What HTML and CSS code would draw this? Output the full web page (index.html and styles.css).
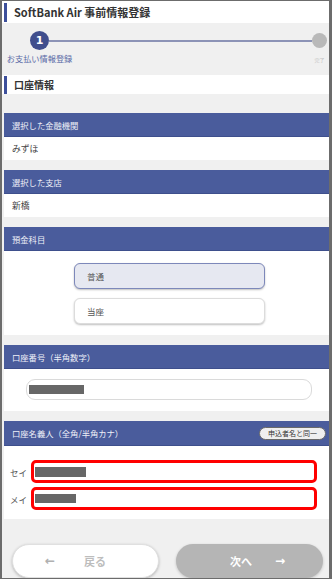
FILE: index.html
```html
<!DOCTYPE html>
<html lang="ja">
<head>
<meta charset="utf-8">
<title>SoftBank Air 事前情報登録</title>
<link rel="stylesheet" href="styles.css">
</head>
<body>
<div class="frame">
  <header class="title"><span class="mark"></span><h1>SoftBank Air 事前情報登録</h1></header>

  <div class="steps">
    <span class="dot active">1</span>
    <span class="line"></span>
    <span class="dot end"></span>
    <span class="label l1">お支払い情報登録</span>
    <span class="label l2">完了</span>
  </div>

  <h2 class="heading"><span class="mark"></span>口座情報</h2>

  <main class="cards">
    <section class="card">
      <div class="card-head">選択した金融機関</div>
      <div class="card-body value">みずほ</div>
    </section>

    <section class="card">
      <div class="card-head">選択した支店</div>
      <div class="card-body value">新橋</div>
    </section>

    <section class="card">
      <div class="card-head">預金科目</div>
      <div class="card-body choices">
        <button class="choice selected">普通</button>
        <button class="choice">当座</button>
      </div>
    </section>

    <section class="card">
      <div class="card-head">口座番号（半角数字）</div>
      <div class="card-body number">
        <div class="field"><span class="redact r1"></span></div>
      </div>
    </section>

    <section class="card">
      <div class="card-head split">口座名義人（全角/半角カナ）<button class="same">申込者名と同一</button></div>
      <div class="card-body names">
        <div class="name-row"><span class="kana">セイ</span><div class="field error"><span class="redact r2"></span></div></div>
        <div class="name-row"><span class="kana">メイ</span><div class="field error"><span class="redact r3"></span></div></div>
      </div>
    </section>
  </main>

  <footer class="nav">
    <button class="btn back"><span class="arrow">&#8592;</span><span>戻る</span></button>
    <button class="btn next"><span>次へ</span><span class="arrow">&#8594;</span></button>
  </footer>
</div>
</body>
</html>
```

FILE: styles.css
```css
* { box-sizing: border-box; }

html, body {
  margin: 0;
  padding: 0;
}

body {
  font-family: "Noto Sans CJK JP", "Noto Sans", sans-serif;
  color: #333;
}

.frame {
  width: 332px;
  height: 579px;
  border-style: solid;
  border-color: #6c6c6c;
  border-width: 1px 3px 1px 2px;
  background: #f0f0f0;
  overflow: hidden;
  display: flex;
  flex-direction: column;
}

.title {
  height: 23px;
  background: #fff;
  display: flex;
  align-items: center;
  padding-left: 2px;
}

.mark {
  display: block;
  width: 3px;
  height: 19px;
  background: #3d4f9b;
  margin-right: 7px;
}

.title h1 {
  margin: 0;
  font-size: 11px;
  font-weight: 700;
  color: #333;
  line-height: 1;
}

.steps {
  height: 53px;
  display: grid;
  grid-template-columns: 19px 1fr 15px;
  grid-template-rows: 19px auto;
  align-content: start;
  align-items: center;
  padding: 8px 2px 0 28px;
}

.dot {
  display: flex;
  align-items: center;
  justify-content: center;
  border-radius: 50%;
}

.dot.active {
  width: 19px;
  height: 19px;
  background: #404e8d;
  color: #fff;
  font-size: 11px;
  font-weight: 700;
  font-family: "DejaVu Sans", sans-serif;
}

.dot.end {
  width: 15px;
  height: 15px;
  background: #b9b9b9;
}

.line {
  height: 2px;
  background: #8c93b6;
}

.label {
  grid-row: 2;
  justify-self: center;
  white-space: nowrap;
  margin-top: 4px;
  line-height: 1;
}

.l1 {
  grid-column: 1;
  font-size: 8.2px;
  color: #5868a6;
}

.l2 {
  grid-column: 3;
  font-size: 5px;
  color: #c2c2c2;
  margin-top: 6px;
}

.heading {
  margin: 0;
  height: 19px;
  background: #fff;
  display: flex;
  align-items: center;
  padding-left: 2px;
  font-size: 10px;
  font-weight: 700;
  color: #333;
}

.heading .mark {
  height: 18px;
}

.cards {
  display: flex;
  flex-direction: column;
  gap: 10px;
  padding: 19px 0 0 2px;
}

.card-head {
  height: 24px;
  background: #4a5c9c;
  border-bottom: 1px solid #3e4f8c;
  color: #eef0f8;
  font-size: 8.3px;
  display: flex;
  align-items: center;
  padding-left: 8px;
}

.card-head.split {
  height: 25px;
  justify-content: space-between;
  padding-right: 3px;
}

.card-body {
  background: #fff;
}

.card-body.value {
  height: 23px;
  display: flex;
  align-items: center;
  padding-left: 8px;
  font-size: 8.8px;
  color: #444;
}

.choices {
  display: flex;
  flex-direction: column;
  gap: 9px;
  padding: 12px 0 11px 70px;
}

.choice {
  width: 191px;
  height: 26px;
  border: 1px solid #dcdcdc;
  border-radius: 6px;
  background: #fff;
  box-shadow: 0 1px 2px rgba(0, 0, 0, 0.25);
  font-family: inherit;
  font-size: 8.5px;
  color: #555;
  text-align: left;
  padding: 0 0 0 12px;
}

.choice.selected {
  background: #e6e8f1;
  border-color: #7d88ba;
}

.number {
  padding: 10px 17px 11px 22px;
}

.field {
  height: 21px;
  border: 1px solid #dadada;
  border-radius: 9px;
  background: #fff;
  display: flex;
  align-items: center;
  padding-left: 2px;
}

.redact {
  display: block;
  height: 9px;
  background: #676767;
}

.r1 { width: 55px; }
.r2 { width: 51px; height: 10px; }
.r3 { width: 41px; height: 9px; }

.same {
  width: 67px;
  height: 13px;
  border: 1px solid #6a6a6a;
  border-radius: 7px;
  background: #efefef;
  font-family: inherit;
  font-size: 7px;
  color: #333;
  padding: 0;
  line-height: 1;
}

.names {
  display: flex;
  flex-direction: column;
  gap: 4px;
  padding: 14px 12px 9px 6px;
}

.name-row {
  display: flex;
  align-items: center;
}

.kana {
  width: 21px;
  font-size: 8.5px;
  color: #555;
}

.field.error {
  flex: 1;
  height: 23px;
  border: 3px solid #ff0000;
  border-radius: 5px;
  padding-left: 1px;
}

.nav {
  display: flex;
  gap: 17px;
  padding: 25px 0 0 10px;
}

.btn {
  width: 147px;
  height: 34px;
  flex: none;
  border-radius: 17px;
  font-family: inherit;
  font-size: 11px;
  font-weight: 700;
  display: flex;
  align-items: center;
  padding: 0;
}

.btn .arrow {
  font-family: "DejaVu Sans", sans-serif;
  font-size: 12px;
  font-weight: 700;
}

.back {
  background: #fff;
  border: 1px solid #e0e0e0;
  box-shadow: 0 1px 3px rgba(0, 0, 0, 0.25);
  color: #bdbdbd;
  gap: 29px;
  padding-left: 32px;
}

.back .arrow {
  color: #b0b0b0;
}

.next {
  background: #b5b5b5;
  border: none;
  box-shadow: 0 1px 3px rgba(0, 0, 0, 0.2);
  color: #fff;
  gap: 23px;
  padding-left: 54px;
}
```
